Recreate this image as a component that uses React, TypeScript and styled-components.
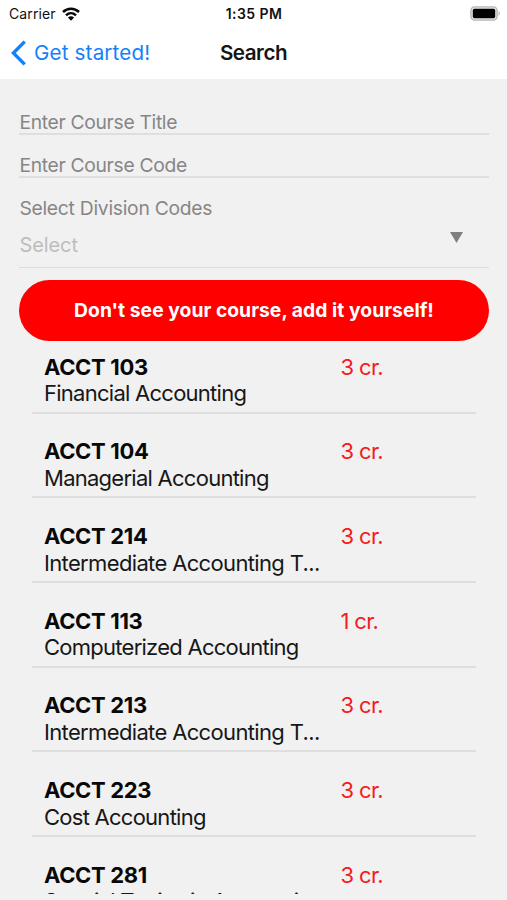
import React from "react";
import styled, { createGlobalStyle } from "styled-components";

const GlobalStyle = createGlobalStyle`
  * { box-sizing: border-box; }
  body { margin: 0; font-family: Inter, "Liberation Sans", sans-serif; background: #f1f1f1; }
`;

const Screen = styled.div`
  display: flex;
  flex-direction: column;
  width: 507px;
  height: 900px;
  overflow: hidden;
  background: #f1f1f1;
`;

const Header = styled.header`
  flex: none;
  height: 79px;
  background: #fff;
`;

const StatusBar = styled.div`
  display: grid;
  grid-template-columns: 1fr auto 1fr;
  align-items: center;
  height: 27px;
  padding: 0 6px 0 9px;
  color: #111;
`;

const Carrier = styled.span`
  display: flex;
  align-items: center;
  gap: 6px;
  font-size: 14px;
  letter-spacing: 0.1px;
`;

const Clock = styled.span`
  font-size: 14px;
  font-weight: 600;
  letter-spacing: 0.45px;
  margin-right: 2px;
`;

const BatteryIcon = styled.svg`
  justify-self: end;
`;

const NavBar = styled.nav`
  display: grid;
  grid-template-columns: 1fr auto 1fr;
  align-items: center;
  height: 52px;
  padding: 0 11px;
`;

const BackLink = styled.a`
  display: flex;
  align-items: center;
  gap: 8px;
  color: #1480fa;
  font-size: 20.6px;
  line-height: 26px;
  letter-spacing: 0.17px;
`;

const Title = styled.h1`
  margin: 0;
  font-size: 20.6px;
  line-height: 26px;
  font-weight: 600;
  letter-spacing: -0.45px;
  color: #151515;
`;

const Form = styled.form`
  flex: none;
  padding: 23px 18px 0 19px;
`;

const Field = styled.div`
  height: 43px;
  padding-top: 8px;
`;

const FieldText = styled.div`
  height: 25px;
  border-bottom: 2px solid #dfdfdf;
  font-size: 19.3px;
  line-height: 25px;
  letter-spacing: -0.32px;
  text-indent: 0.4px;
  color: #868686;
`;

const Label = styled.label`
  display: block;
  padding-top: 8px;
  font-size: 19.3px;
  line-height: 25px;
  letter-spacing: -0.27px;
  text-indent: 0.4px;
  color: #868686;
`;

const SelectBox = styled.div`
  display: flex;
  justify-content: space-between;
  height: 47px;
  padding: 11px 26px 0 0;
  border-bottom: 1px solid #dcdcdc;
  color: #bdbdbd;
  font-size: 20px;
  line-height: 26px;
  letter-spacing: -0.1px;
  text-indent: 0.5px;
`;

const AddButton = styled.button`
  display: block;
  width: 100%;
  height: 61px;
  margin-top: 12px;
  padding: 0;
  border: 0;
  border-radius: 31px;
  background: #ff0000;
  color: #fff;
  font: 700 19.3px/61px Inter, "Liberation Sans", sans-serif;
  letter-spacing: 0.03px;
`;

const CourseList = styled.ul`
  flex: none;
  height: 553px;
  margin: 0 31px 0 32px;
  padding: 0;
  list-style: none;
  overflow: hidden;
`;

const CourseRow = styled.li`
  display: grid;
  grid-template-columns: 296.5px 1fr;
  align-content: start;
  height: 84.7px;
  padding: 24.9px 0 0 12px;
  border-bottom: 2px solid #dedede;
  font-size: 22px;
  line-height: 26.6px;

  &:first-child {
    height: 72.5px;
    padding-top: 12.8px;
    line-height: 26px;
  }
`;

const Code = styled.strong`
  font-weight: 700;
  letter-spacing: -0.34px;
  color: #080808;
`;

const Credits = styled.span`
  letter-spacing: -0.65px;
  color: #f41c1c;
`;

const Name = styled.span<{ $spacing?: number }>`
  width: 285px;
  white-space: nowrap;
  letter-spacing: ${(p) => p.$spacing ?? -0.74}px;
  color: #171717;
`;

const courses = [
  { code: "ACCT 103", name: "Financial Accounting", credits: 3 },
  { code: "ACCT 104", name: "Managerial Accounting", credits: 3 },
  { code: "ACCT 214", name: "Intermediate Accounting T...", credits: 3, spacing: -0.65 },
  { code: "ACCT 113", name: "Computerized Accounting", credits: 1 },
  { code: "ACCT 213", name: "Intermediate Accounting T...", credits: 3, spacing: -0.65 },
  { code: "ACCT 223", name: "Cost Accounting", credits: 3 },
  { code: "ACCT 281", name: "Special Topics in Accounti...", credits: 3 },
];

export default function App() {
  return (
    <>
      <GlobalStyle />
      <Screen>
        <Header>
          <StatusBar>
            <Carrier>
              Carrier
              <svg width="18" height="14" viewBox="0 0 18 14" fill="none" stroke="#080808" strokeWidth="2.5">
                <path d="M1 5C5.5.7 12.5.7 17 5M4 8.3C7 5.5 11 5.5 14 8.3" />
                <path d="M9 13.7 5.9 10.5Q9 8.2 12.1 10.5Z" fill="#080808" stroke="none" />
              </svg>
            </Carrier>
            <Clock>1:35 PM</Clock>
            <BatteryIcon width="31" height="15" viewBox="0 0 31 15">
              <rect x=".9" y=".9" width="26.2" height="13.2" rx="3.8" fill="#e7e7e7" stroke="#b5b5b5" strokeWidth="1.4" />
              <rect x="2.8" y="2.8" width="22.4" height="9.4" rx="1.6" fill="#000" />
              <path d="M28.6 5Q31 7.5 28.6 10Z" fill="#aaa" />
            </BatteryIcon>
          </StatusBar>
          <NavBar>
            <BackLink>
              <svg width="15" height="26" viewBox="0 0 15 26" fill="none" stroke="#1480fa" strokeWidth="3.4">
                <path d="M13.7 1.6 2.4 13 13.7 24.4" />
              </svg>
              Get started!
            </BackLink>
            <Title>Search</Title>
          </NavBar>
        </Header>
        <Form>
          <Field><FieldText>Enter Course Title</FieldText></Field>
          <Field><FieldText>Enter Course Code</FieldText></Field>
          <Label>Select Division Codes</Label>
          <SelectBox>
            Select
            <svg width="13" height="11" viewBox="0 0 13 11"><path d="M0 0H13L6.5 11Z" fill="#808080" /></svg>
          </SelectBox>
          <AddButton type="button">Don't see your course, add it yourself!</AddButton>
        </Form>
        <CourseList>
          {courses.map((c) => (
            <CourseRow key={c.code}>
              <Code>{c.code}</Code>
              <Credits>{c.credits} cr.</Credits>
              <Name $spacing={c.spacing}>{c.name}</Name>
            </CourseRow>
          ))}
        </CourseList>
      </Screen>
    </>
  );
}
